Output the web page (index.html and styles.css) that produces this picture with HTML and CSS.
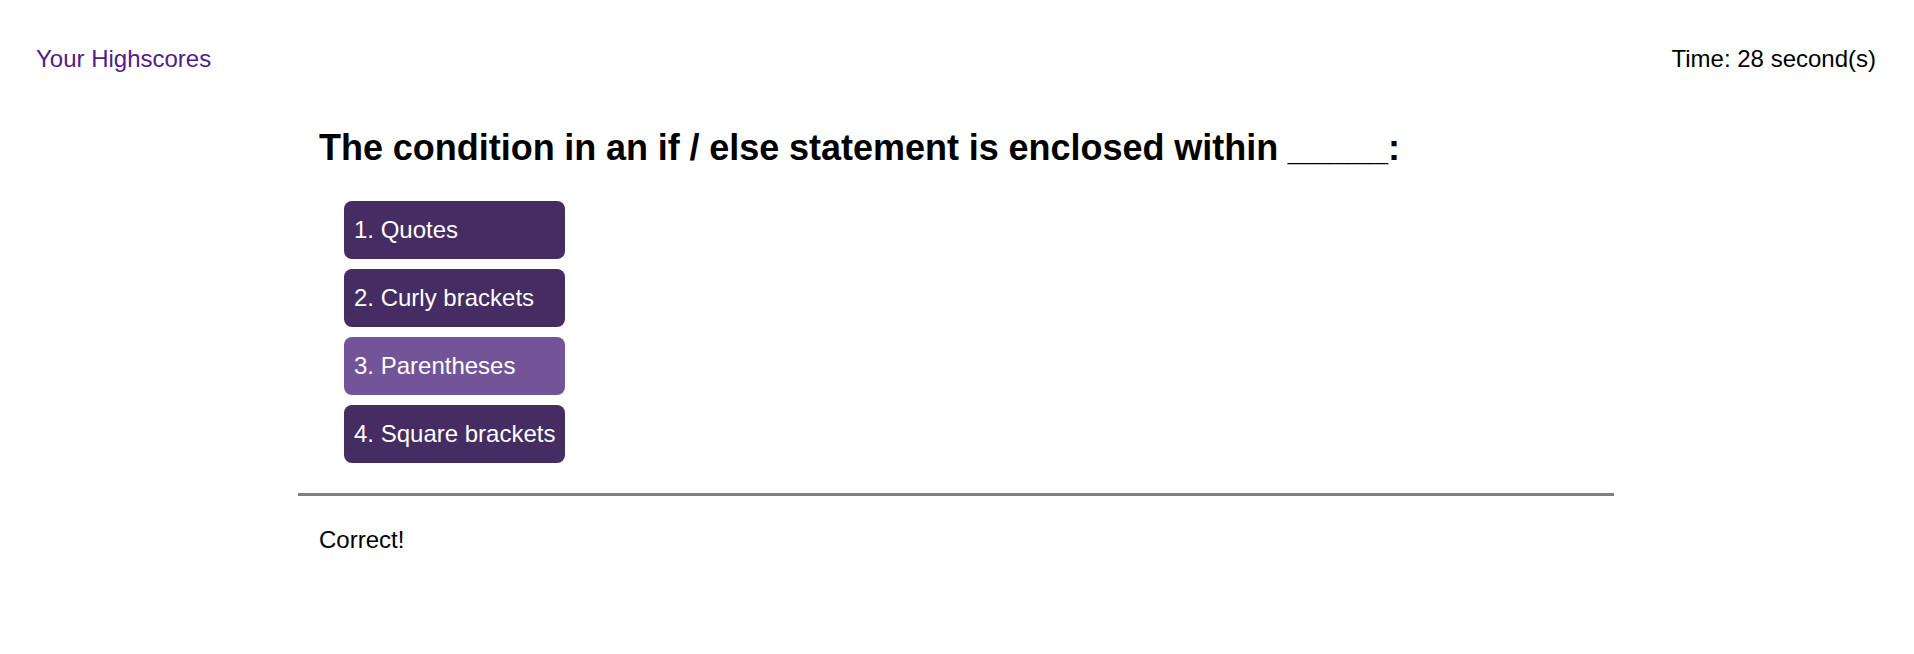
FILE: index.html
```html
<!DOCTYPE html>
<html lang="en">
<head>
<meta charset="utf-8">
<title>Code Quiz</title>
<link rel="stylesheet" href="styles.css">
</head>
<body>
<header class="top-bar">
  <a class="highscores-link" href="#">Your Highscores</a>
  <div class="timer">Time: 28 second(s)</div>
</header>
<main class="quiz">
  <h1 class="question">The condition in an if / else statement is enclosed within _____:</h1>
  <div class="answers">
    <button class="answer">1. Quotes</button>
    <button class="answer">2. Curly brackets</button>
    <button class="answer answer-active">3. Parentheses</button>
    <button class="answer">4. Square brackets</button>
  </div>
  <hr class="divider">
  <p class="feedback">Correct!</p>
</main>
</body>
</html>
```
FILE: styles.css
```css
html, body {
  margin: 0;
  padding: 0;
  background: #ffffff;
}
body {
  font-family: "Liberation Sans", Arial, sans-serif;
  color: #000000;
  padding-right: 2px;
}
.top-bar {
  display: flex;
  justify-content: space-between;
  align-items: flex-start;
  padding: 45px 36px 0 36px;
  font-size: 24px;
  line-height: 28px;
}
.highscores-link {
  color: #551a8b;
  text-decoration: none;
}
.timer {
  color: #000000;
}
.quiz {
  width: 1316px;
  margin: 0 auto;
}
.question {
  margin: 54px 0 0 0;
  padding: 0 21px;
  font-size: 36px;
  line-height: 42px;
  font-weight: bold;
  word-spacing: -0.3px;
}
.answers {
  display: flex;
  flex-direction: column;
  gap: 10px;
  width: fit-content;
  margin: 32px 0 0 46px;
}
.answer {
  display: block;
  text-align: left;
  font-family: "Liberation Sans", Arial, sans-serif;
  font-size: 24px;
  line-height: 28px;
  padding: 15px 10px;
  border: none;
  border-radius: 8px;
  background: #452c63;
  color: #ffffff;
  cursor: pointer;
}
.answer-active {
  background: #735499;
}
.divider {
  margin: 30px 0 0 0;
  border: none;
  height: 3px;
  background: #808080;
}
.feedback {
  margin: 30px 0 0 0;
  padding: 0 21px;
  font-size: 24px;
  line-height: 28px;
}
```
